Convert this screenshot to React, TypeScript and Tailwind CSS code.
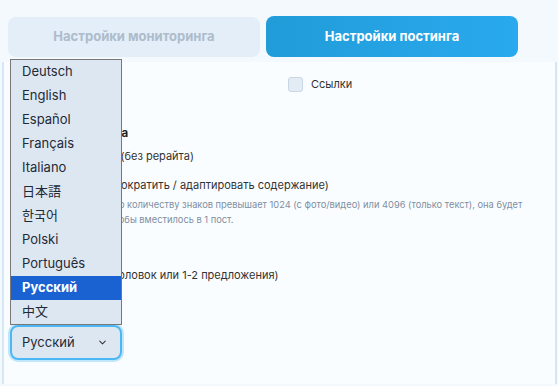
import React from 'react';
import { ChevronDown } from 'lucide-react';

const languages = ['Deutsch', 'English', 'Español', 'Français', 'Italiano', '日本語', '한국어', 'Polski', 'Português', 'Русский', '中文'];

function Radio({ children }: { children: React.ReactNode }) {
  return (
    <div className="flex items-center gap-2 h-[16px]">
      <span className="w-[12px] h-[12px] rounded-full border border-[#c9d6e3] bg-[#e6eef6]" />
      <span className="text-[11px] text-[#333]">{children}</span>
    </div>
  );
}

export default function App() {
  return (
    <div className="relative h-[386px] overflow-hidden bg-[#f4f9fe] font-['Inter','Noto_Sans_CJK_JP',sans-serif]">
      {/* Tabs */}
      <div className="flex gap-[6px] pl-[8px] pr-[40px] pt-[17px]">
        <button className="flex-1 h-[40px] rounded-[8px] bg-[#e3eef8] text-[13px] font-bold text-[#adbccb]">
          Настройки мониторинга
        </button>
        <button className="flex-1 h-[41px] -mt-px rounded-[8px] bg-gradient-to-r from-[#219cd9] to-[#29a9ee] text-[13px] font-bold text-white">
          Настройки постинга
        </button>
      </div>

      {/* Panel */}
      <div className="mt-[5px] ml-[2px] mr-[1px] h-[322px] border-l-2 border-r-2 border-[#d5e8f8] bg-[#fafdff]">
        <div className="grid grid-cols-[266px_1fr] px-[18px] pt-[14px]">
          <label className="flex items-center gap-2 text-[11px] text-[#333]">
            <span className="w-[15px] h-[15px] rounded-[3px] border border-[#c9d6e3] bg-[#e3ebf4]" />
            Медиа
          </label>
          <label className="flex items-center gap-[8px] text-[11px] text-[#333]">
            <span className="w-[15px] h-[15px] rounded-[3px] border border-[#c9d6e3] bg-[#e3ebf4]" />
            Ссылки
          </label>
        </div>

        <div className="pl-[20px] pt-[32px]">
          <div className="text-[11.5px] font-bold text-[#222] leading-[16px]">Обработка текста</div>
          <div className="mt-[8px] -ml-[6px]">
            <Radio>Оригинальный (без рерайта)</Radio>
          </div>
          <div className="mt-[13px] ml-[6px]">
            <Radio>Рерайт ИИ (сократить / адаптировать содержание)</Radio>
          </div>
          <div className="mt-[3px] text-[9.3px] leading-[15px] text-[#7d8fa3]">
            <div className="pl-[11px]">
              Если сообщение по количеству знаков превышает 1024 (с фото/видео) или 4096 (только текст), она будет
            </div>
            <div className="pl-[12px]">сокращена так, чтобы вместилось в 1 пост.</div>
          </div>
          <div className="mt-[18px]">
            <Radio>Пересказ</Radio>
          </div>
          <div className="mt-[7px]">
            <Radio>Короткий (заголовок или 1-2 предложения)</Radio>
          </div>
          <div className="mt-[14px] text-[11px] text-[#333]">Язык постинга</div>
        </div>

        <div className="pl-[6px] pt-[11px]">
          <div className="w-[112px] h-[35px] flex items-center justify-between pl-[10px] pr-[12px] rounded-[8px] border-2 border-[#4cb8f3] bg-[#dde7f2] shadow-[0_0_0_2px_rgba(125,200,245,0.45)] text-[13px] text-[#1f2a37]">
            Русский
            <ChevronDown className="w-[11px] h-[11px] text-[#333]" strokeWidth={2.2} />
          </div>
        </div>
      </div>

      {/* Native select popup */}
      <div className="absolute left-[10px] top-[59px] w-[112px] border border-[#787878] bg-[#dde7f2]">
        {languages.map((lang) => (
          <div
            key={lang}
            className={
              lang === 'Русский'
                ? 'h-[24px] flex items-center pl-[11px] text-[13px] font-bold text-white bg-[#1a62d1]'
                : 'h-[24px] flex items-center pl-[11px] text-[13px] text-[#1f2a37]'
            }
          >
            {lang}
          </div>
        ))}
      </div>
    </div>
  );
}
